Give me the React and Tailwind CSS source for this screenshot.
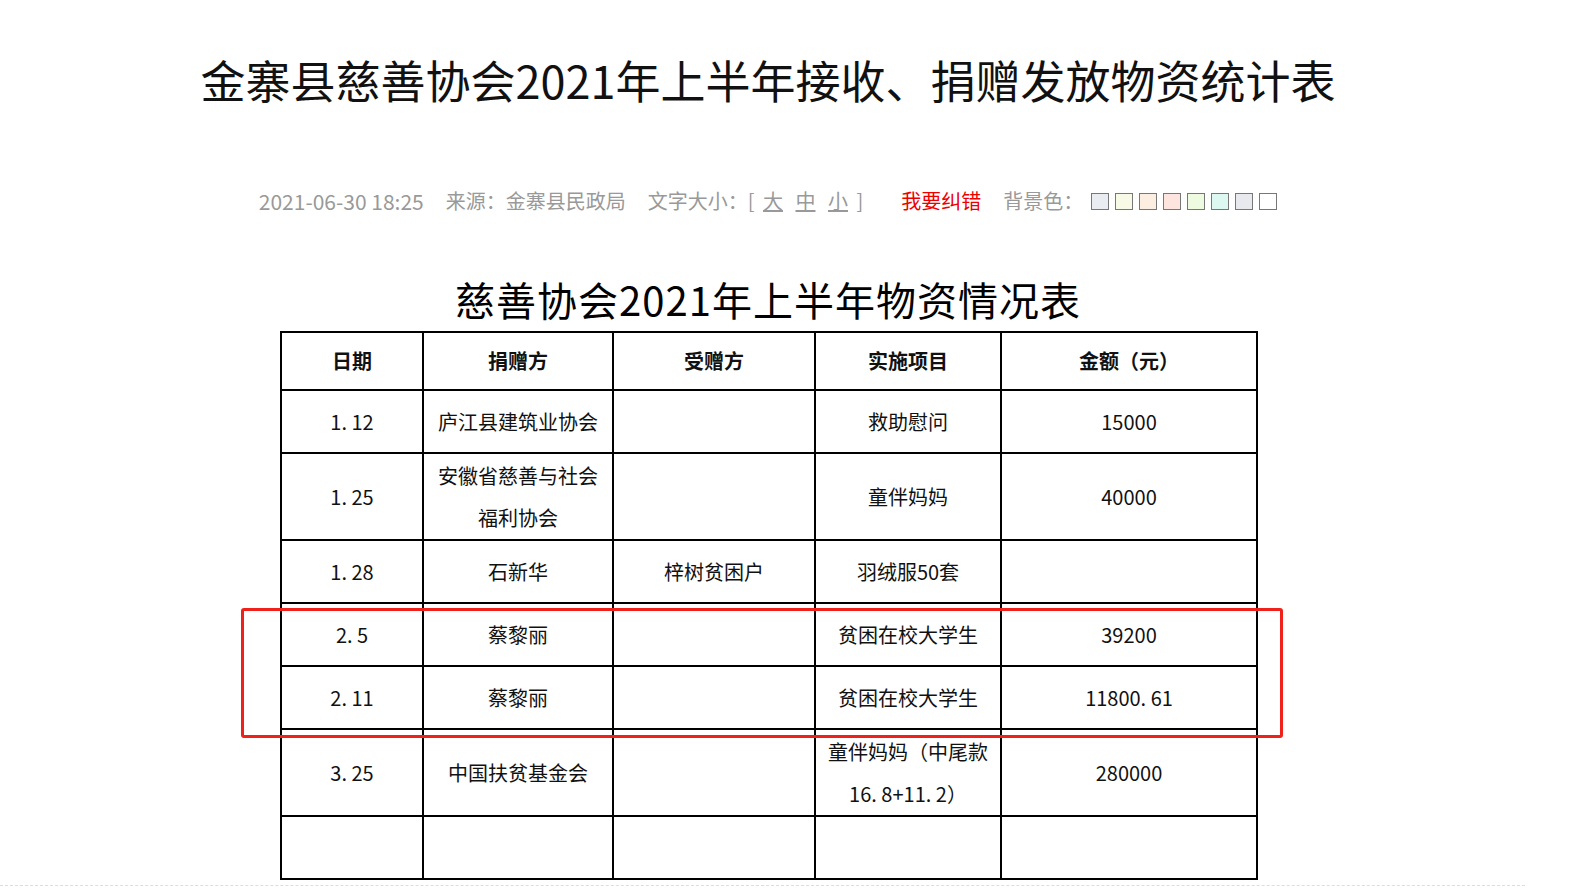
const rows = [
  ['1. 12', '庐江县建筑业协会', '', '救助慰问', '15000', 'h-[63px]'],
  ['1. 25', <>安徽省慈善与社会<br />福利协会</>, '', '童伴妈妈', '40000', 'h-[87px]'],
  ['1. 28', '石新华', '梓树贫困户', '羽绒服50套', '', 'h-[63px]'],
  ['2. 5', '蔡黎丽', '', '贫困在校大学生', '39200', 'h-[63px]'],
  ['2. 11', '蔡黎丽', '', '贫困在校大学生', '11800. 61', 'h-[63px]'],
  ['3. 25', '中国扶贫基金会', '', <>童伴妈妈（中尾款<br />16. 8+11. 2）</>, '280000', 'h-[87px]'],
  ['', '', '', '', '', 'h-[63px]'],
];

const swatches = ['#e9edf2', '#f8fae6', '#fdeee2', '#fde4df', '#effbe0', '#dcf8f1', '#e8e9ee', '#ffffff'];

export default function App() {
  return (
    <div className="relative h-[893px] overflow-hidden bg-white pr-[34px]" style={{ fontFamily: '"Noto Sans CJK SC", "Open Sans", sans-serif' }}>
      <h1 className="pt-[50px] text-center text-[45px] leading-[60px] text-[#111]">金寨县慈善协会2021年上半年接收、捐赠发放物资统计表</h1>

      <div className="mt-[78px] flex items-center justify-center gap-[22px] text-[20px] leading-[26px] text-[#999]">
        <span className="text-[21px]">2021-06-30 18:25</span>
        <span>来源：金寨县民政局</span>
        <span>文字大小：[ <u className="mx-1">大</u> <u className="mx-1">中</u> <u className="mx-1">小</u> ]</span>
        <span className="ml-[16px] text-[#e00]">我要纠错</span>
        <span className="flex items-center">背景色：
          <span className="ml-[8px] flex gap-[6px]">
            {swatches.map((c) => (
              <span key={c} className="h-[17px] w-[18px] border border-[#777]" style={{ background: c }} />
            ))}
          </span>
        </span>
      </div>

      <div className="mt-[60px] text-center text-[40px] leading-[50px] tracking-[1px] text-black">慈善协会2021年上半年物资情况表</div>

      <table className="ml-[280px] mt-[7px] w-[978px] border-collapse text-center text-[20px] text-[#111]">
        <colgroup>
          <col className="w-[142px]" /><col className="w-[190px]" /><col className="w-[202px]" /><col className="w-[186px]" /><col />
        </colgroup>
        <thead>
          <tr className="h-[58px] font-bold">
            {['日期', '捐赠方', '受赠方', '实施项目', '金额（元）'].map((h) => (
              <td key={h} className="border-2 border-black">{h}</td>
            ))}
          </tr>
        </thead>
        <tbody>
          {rows.map((r, i) => (
            <tr key={i} className={r[5]}>
              {r.slice(0, 5).map((c, j) => (
                <td key={j} className="border-2 border-black leading-[42px]">{c}</td>
              ))}
            </tr>
          ))}
        </tbody>
      </table>

      <div className="absolute left-[241px] top-[608px] h-[130px] w-[1042px] rounded-[3px] border-[3px] border-[#f0201a]" />
      <div className="absolute left-0 top-[885px] w-[1525px] border-t border-dashed border-[#ddd]" />
    </div>
  );
}
